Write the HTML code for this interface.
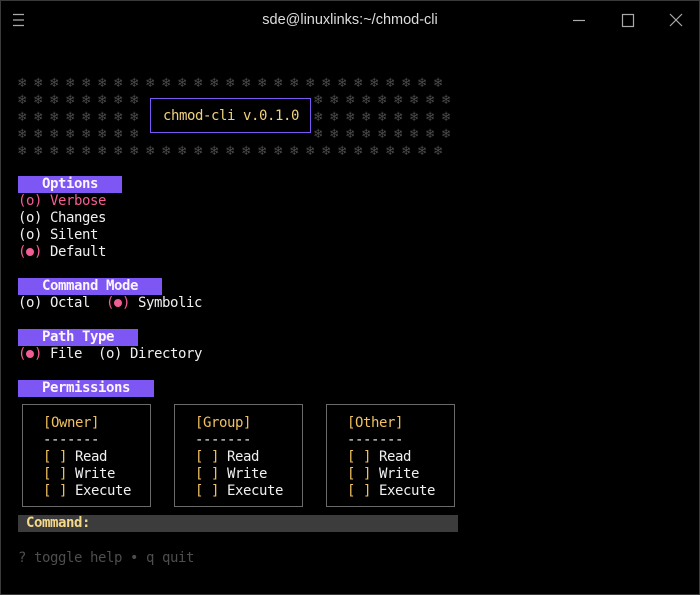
<!DOCTYPE html>
<html><head><meta charset="utf-8"><style>
*{margin:0;padding:0;box-sizing:border-box}
html,body{width:700px;height:595px;background:#000;overflow:hidden}
body{position:relative;font-family:"DejaVu Sans Mono","Liberation Mono",monospace;font-size:14px;letter-spacing:-0.43px;color:#f0f0f0}
.frame{position:absolute;left:0;top:0;width:700px;height:595px;border:1px solid #3a3a3a}
.l{position:absolute;left:18px;height:17px;line-height:17px;white-space:pre}
.sn{color:#4a4a4a}
.hd{background:#7d56f4;color:#fbf5ff;font-weight:bold}
.pk{color:#f25d94}
.dot{display:inline-block;width:8px;height:8px;border-radius:50%;background:#f25d94;vertical-align:-0px}
.box{position:absolute;top:404px;width:129px;height:103px;border:1px solid #6a6a6a}
.box div{position:absolute;left:20px;height:17px;line-height:17px;white-space:pre}
.y{color:#f0c060}
.tt{position:absolute;top:12px;left:0;width:700px;text-align:center;font-family:"Liberation Sans",sans-serif;font-size:14.5px;letter-spacing:0;color:#ddd}
</style></head><body>
<div class="frame"></div>
<div class="tt">sde@linuxlinks:~/chmod-cli</div>
<svg style="position:absolute;left:0;top:0" width="700" height="40">
<g stroke="#aaa" stroke-width="1.2" fill="none">
<path d="M13 14.5h11M13 20h11M13 25.5h11"/>
<path d="M573 20.5h12"/>
<rect x="622.5" y="14.5" width="11" height="12"/>
<path d="M670 14l12 12M682 14l-12 12"/>
</g></svg>
<div class="l sn" style="top:75px">❄ ❄ ❄ ❄ ❄ ❄ ❄ ❄ ❄ ❄ ❄ ❄ ❄ ❄ ❄ ❄ ❄ ❄ ❄ ❄ ❄ ❄ ❄ ❄ ❄ ❄ ❄</div>
<div class="l sn" style="top:92px">❄ ❄ ❄ ❄ ❄ ❄ ❄ ❄                      ❄ ❄ ❄ ❄ ❄ ❄ ❄ ❄ ❄</div>
<div class="l sn" style="top:109px">❄ ❄ ❄ ❄ ❄ ❄ ❄ ❄                      ❄ ❄ ❄ ❄ ❄ ❄ ❄ ❄ ❄</div>
<div class="l sn" style="top:126px">❄ ❄ ❄ ❄ ❄ ❄ ❄ ❄                      ❄ ❄ ❄ ❄ ❄ ❄ ❄ ❄ ❄</div>
<div class="l sn" style="top:143px">❄ ❄ ❄ ❄ ❄ ❄ ❄ ❄ ❄ ❄ ❄ ❄ ❄ ❄ ❄ ❄ ❄ ❄ ❄ ❄ ❄ ❄ ❄ ❄ ❄ ❄ ❄</div>
<div style="position:absolute;left:150px;top:98px;width:161px;height:35px;border:1px solid #7d56f4;background:#000"></div>
<div class="l" style="top:108px;left:163px;color:#f0d080">chmod-cli v.0.1.0</div>

<div class="l hd" style="top:176px;width:104px">   Options</div>
<div class="l pk" style="top:193px">(o) Verbose</div>
<div class="l" style="top:210px">(o) Changes</div>
<div class="l" style="top:227px">(o) Silent</div>
<div class="l" style="top:244px"><span class="pk">(<span class="dot"></span>)</span> Default</div>

<div class="l hd" style="top:278px;width:144px">   Command Mode</div>
<div class="l" style="top:295px">(o) Octal  <span class="pk">(<span class="dot"></span>)</span> Symbolic</div>

<div class="l hd" style="top:329px;width:120px">   Path Type</div>
<div class="l" style="top:346px"><span class="pk">(<span class="dot"></span>)</span> File  (o) Directory</div>

<div class="l hd" style="top:380px;width:136px">   Permissions</div>

<div class="box" style="left:22px">
<div class="y" style="top:10px">[Owner]</div><div style="top:27px">-------</div>
<div style="top:44px"><span class="y">[ ]</span> Read</div><div style="top:61px"><span class="y">[ ]</span> Write</div><div style="top:78px"><span class="y">[ ]</span> Execute</div></div>
<div class="box" style="left:174px">
<div class="y" style="top:10px">[Group]</div><div style="top:27px">-------</div>
<div style="top:44px"><span class="y">[ ]</span> Read</div><div style="top:61px"><span class="y">[ ]</span> Write</div><div style="top:78px"><span class="y">[ ]</span> Execute</div></div>
<div class="box" style="left:326px">
<div class="y" style="top:10px">[Other]</div><div style="top:27px">-------</div>
<div style="top:44px"><span class="y">[ ]</span> Read</div><div style="top:61px"><span class="y">[ ]</span> Write</div><div style="top:78px"><span class="y">[ ]</span> Execute</div></div>

<div class="l" style="top:515px;width:440px;height:17px;background:#3c3c3c;color:#f5d98a;font-weight:bold"> Command:</div>
<div class="l" style="top:550px;color:#4e4e4e">? toggle help • q quit</div>
</body></html>
